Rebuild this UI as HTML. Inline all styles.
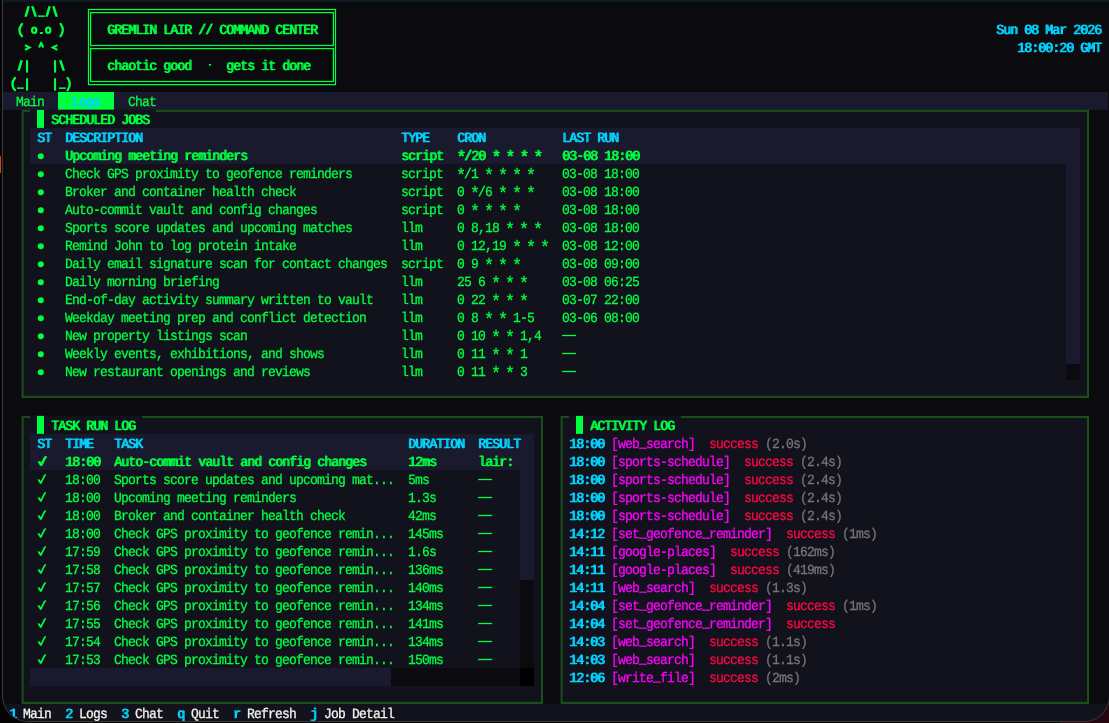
<!DOCTYPE html>
<html><head><meta charset="utf-8"><title>Gremlin Lair</title>
<style>
html,body{margin:0;padding:0;width:1109px;height:723px;overflow:hidden;background:#050505}
#br{position:absolute;left:1060px;top:690px;width:49px;height:33px;background:#26070f}
#win{position:absolute;left:2px;top:-40px;width:1108px;height:762px;box-sizing:border-box;border:1px solid #3a3a3e;border-top:none;border-radius:0 0 26px 26px;overflow:hidden;background:#0a0a0f}
#scr{position:absolute;left:-3px;top:40px;width:1109px;height:723px}
#txt{position:absolute;left:0;top:0;width:1109px;height:723px;will-change:transform}
#txo{position:absolute;left:0;top:0;width:1109px;height:723px;will-change:transform}
.r{position:absolute}
.t{position:absolute;font:14px/18px "Liberation Mono",monospace;white-space:pre;letter-spacing:-0.8745px;transform:scaleX(0.93);transform-origin:0 0;margin-top:2px;-webkit-text-stroke:0.3px currentColor;text-rendering:geometricPrecision}
.ast{font-size:18px;margin-top:3.7px;margin-left:-1.35px;-webkit-text-stroke:0.3px currentColor}
.us{margin-top:1px}
.b{text-shadow:1px 0 0 currentColor}
.g{color:#00ff41}.c{color:#00d4ff}.m{color:#ff00ff}.rd{color:#ff0844}.gy{color:#767678}.w{color:#f2f2ec}
</style></head><body>
<div id="br"></div><div style="position:absolute;left:0;top:156px;width:1px;height:17px;background:#cc4a0a"></div>
<div id="win"><div id="scr">
<svg class="r" style="left:0;top:0" width="1109" height="723" viewBox="0 0 1109 723">
<rect x="0" y="0" width="1109" height="2.2" fill="#0d1a24"/>
<rect x="3" y="92" width="1105" height="18" fill="#1a1a2e"/>
<rect x="58" y="92" width="56" height="18" fill="#00ff41"/>
<rect x="3" y="704" width="1105" height="20" fill="#12121c"/>
<polygon transform="translate(23 2)" points="1.3,14.8 3.9,14.8 6.9,4.2 4.3,4.2" fill="#00ff41"/>
<polygon transform="translate(30 2)" points="4.4,14.8 7.0,14.8 3.7,4.2 1.1,4.2" fill="#00ff41"/>
<rect transform="translate(37 2)" x="1.0" y="13.4" width="6.8" height="1.5" fill="#00ff41"/>
<polygon transform="translate(44 2)" points="1.3,14.8 3.9,14.8 6.9,4.2 4.3,4.2" fill="#00ff41"/>
<polygon transform="translate(51 2)" points="4.4,14.8 7.0,14.8 3.7,4.2 1.1,4.2" fill="#00ff41"/>
<path transform="translate(16 20)" d="M6.0 3.9 Q0.8 10 6.0 16.2" fill="none" stroke="#00ff41" stroke-width="2.3" stroke-linecap="round"/>
<path transform="translate(30 20)" fill-rule="evenodd" fill="#00ff41" d="M0.95 10.2 a3.25 3.75 0 1 0 6.5 0 a3.25 3.75 0 1 0 -6.5 0 Z M3.2 10.2 a1.0 1.75 0 1 0 2.0 0 a1.0 1.75 0 1 0 -2.0 0 Z"/>
<rect transform="translate(37 20)" x="2.9" y="12.0" width="3.0" height="2.0" rx="0.5" fill="#00ff41"/>
<path transform="translate(44 20)" fill-rule="evenodd" fill="#00ff41" d="M0.95 10.2 a3.25 3.75 0 1 0 6.5 0 a3.25 3.75 0 1 0 -6.5 0 Z M3.2 10.2 a1.0 1.75 0 1 0 2.0 0 a1.0 1.75 0 1 0 -2.0 0 Z"/>
<path transform="translate(58 20)" d="M2.6 3.9 Q7.0 10 2.6 16.2" fill="none" stroke="#00ff41" stroke-width="2.3" stroke-linecap="round"/>
<path transform="translate(23 38)" d="M1.9 7.1 L6.6 9.5 L1.9 11.9" fill="none" stroke="#00ff41" stroke-width="2.1" stroke-linejoin="miter"/>
<path transform="translate(37 38)" d="M2.1 9.5 L4.15 4.7 L6.2 9.5" fill="none" stroke="#00ff41" stroke-width="2.1" stroke-linejoin="round"/>
<path transform="translate(51 38)" d="M6.4 7.1 L1.7 9.5 L6.4 11.9" fill="none" stroke="#00ff41" stroke-width="2.1" stroke-linejoin="miter"/>
<polygon transform="translate(16 56)" points="1.3,14.8 3.9,14.8 6.9,4.2 4.3,4.2" fill="#00ff41"/>
<rect transform="translate(23 56)" x="3.0" y="4.2" width="2.1" height="12.4" fill="#00ff41"/>
<rect transform="translate(51 56)" x="3.0" y="4.2" width="2.1" height="12.4" fill="#00ff41"/>
<polygon transform="translate(58 56)" points="4.4,14.8 7.0,14.8 3.7,4.2 1.1,4.2" fill="#00ff41"/>
<path transform="translate(9 74)" d="M6.0 3.9 Q0.8 10 6.0 16.2" fill="none" stroke="#00ff41" stroke-width="2.3" stroke-linecap="round"/>
<rect transform="translate(16 74)" x="1.0" y="13.4" width="6.8" height="1.5" fill="#00ff41"/>
<rect transform="translate(23 74)" x="3.0" y="4.2" width="2.1" height="12.4" fill="#00ff41"/>
<rect transform="translate(51 74)" x="3.0" y="4.2" width="2.1" height="12.4" fill="#00ff41"/>
<rect transform="translate(58 74)" x="1.0" y="13.4" width="6.8" height="1.5" fill="#00ff41"/>
<path transform="translate(65 74)" d="M2.6 3.9 Q7.0 10 2.6 16.2" fill="none" stroke="#00ff41" stroke-width="2.3" stroke-linecap="round"/>
<rect x="88.5" y="9.5" width="247" height="75.1" fill="none" stroke="#00ff41" stroke-width="1.25"/>
<rect x="90.6" y="12.6" width="242.8" height="32.9" fill="none" stroke="#00ff41" stroke-width="1.25"/>
<rect x="90.6" y="48.6" width="242.8" height="32.9" fill="none" stroke="#00ff41" stroke-width="1.25"/>
<rect x="208.75" y="63.95" width="2.5" height="1.9" rx="0.8" fill="#00ff41"/>
<rect x="21.6" y="109.9" width="1067.4" height="288.1" fill="#1a4e1a"/>
<rect x="23.6" y="111.9" width="1063.4" height="283.9" fill="#12121c"/>
<rect x="30" y="109.7" width="126" height="2.6" fill="#12121c"/>
<rect x="37" y="109.9" width="7" height="18" fill="#00ff41"/>
<rect x="30" y="128" width="1050" height="36" fill="#1a1a2e"/>
<rect x="1066" y="128" width="14" height="236" fill="#1a1a2e"/>
<rect x="1066" y="364" width="14" height="16" fill="#0a0a0f"/>
<circle cx="40.8" cy="156.3" r="3" fill="#00ff41"/>
<circle cx="40.8" cy="174.3" r="3" fill="#00ff41"/>
<circle cx="40.8" cy="192.3" r="3" fill="#00ff41"/>
<circle cx="40.8" cy="210.3" r="3" fill="#00ff41"/>
<circle cx="40.8" cy="228.3" r="3" fill="#00ff41"/>
<circle cx="40.8" cy="246.3" r="3" fill="#00ff41"/>
<circle cx="40.8" cy="264.3" r="3" fill="#00ff41"/>
<circle cx="40.8" cy="282.3" r="3" fill="#00ff41"/>
<circle cx="40.8" cy="300.3" r="3" fill="#00ff41"/>
<circle cx="40.8" cy="318.3" r="3" fill="#00ff41"/>
<circle cx="40.8" cy="336.3" r="3" fill="#00ff41"/>
<rect x="562.1" y="334.85" width="14" height="1.3" fill="#00ff41"/>
<circle cx="40.8" cy="354.3" r="3" fill="#00ff41"/>
<rect x="562.1" y="352.85" width="14" height="1.3" fill="#00ff41"/>
<circle cx="40.8" cy="372.3" r="3" fill="#00ff41"/>
<rect x="562.1" y="370.85" width="14" height="1.3" fill="#00ff41"/>
<rect x="21.6" y="415.9" width="521.4" height="288.1" fill="#1a4e1a"/>
<rect x="23.6" y="417.9" width="517.4" height="283.9" fill="#12121c"/>
<rect x="30" y="415.7" width="112" height="2.6" fill="#12121c"/>
<rect x="37" y="415.9" width="7" height="18" fill="#00ff41"/>
<rect x="30" y="434" width="504" height="36" fill="#1a1a2e"/>
<rect x="520" y="434" width="14" height="146" fill="#1a1a2e"/>
<rect x="520" y="580" width="14" height="88" fill="#0a0a0f"/>
<rect x="30" y="668" width="361" height="18" fill="#1a1a2e"/>
<rect x="391" y="668" width="129" height="18" fill="#0a0a0f"/>
<rect x="520" y="668" width="14" height="18" fill="#000"/>
<polygon transform="translate(37 452)" points="0.5,9.5 2.3,9.2 3.8,11.2 6.9,5.1 8.9,3.9 9.3,4.4 7.1,8.3 5.0,12.8 4.2,14.0 3.1,13.8 1.6,11.4" fill="#00ff41"/>
<polygon transform="translate(37.9 452)" points="0.5,9.5 2.3,9.2 3.8,11.2 6.9,5.1 8.9,3.9 9.3,4.4 7.1,8.3 5.0,12.8 4.2,14.0 3.1,13.8 1.6,11.4" fill="#00ff41"/>
<polygon transform="translate(37 470)" points="0.5,9.5 2.3,9.2 3.8,11.2 6.9,5.1 8.9,3.9 9.3,4.4 7.1,8.3 5.0,12.8 4.2,14.0 3.1,13.8 1.6,11.4" fill="#00ff41"/>
<rect x="478.1" y="478.85" width="14" height="1.3" fill="#00ff41"/>
<polygon transform="translate(37 488)" points="0.5,9.5 2.3,9.2 3.8,11.2 6.9,5.1 8.9,3.9 9.3,4.4 7.1,8.3 5.0,12.8 4.2,14.0 3.1,13.8 1.6,11.4" fill="#00ff41"/>
<rect x="478.1" y="496.85" width="14" height="1.3" fill="#00ff41"/>
<polygon transform="translate(37 506)" points="0.5,9.5 2.3,9.2 3.8,11.2 6.9,5.1 8.9,3.9 9.3,4.4 7.1,8.3 5.0,12.8 4.2,14.0 3.1,13.8 1.6,11.4" fill="#00ff41"/>
<rect x="478.1" y="514.85" width="14" height="1.3" fill="#00ff41"/>
<polygon transform="translate(37 524)" points="0.5,9.5 2.3,9.2 3.8,11.2 6.9,5.1 8.9,3.9 9.3,4.4 7.1,8.3 5.0,12.8 4.2,14.0 3.1,13.8 1.6,11.4" fill="#00ff41"/>
<rect x="478.1" y="532.85" width="14" height="1.3" fill="#00ff41"/>
<polygon transform="translate(37 542)" points="0.5,9.5 2.3,9.2 3.8,11.2 6.9,5.1 8.9,3.9 9.3,4.4 7.1,8.3 5.0,12.8 4.2,14.0 3.1,13.8 1.6,11.4" fill="#00ff41"/>
<rect x="478.1" y="550.85" width="14" height="1.3" fill="#00ff41"/>
<polygon transform="translate(37 560)" points="0.5,9.5 2.3,9.2 3.8,11.2 6.9,5.1 8.9,3.9 9.3,4.4 7.1,8.3 5.0,12.8 4.2,14.0 3.1,13.8 1.6,11.4" fill="#00ff41"/>
<rect x="478.1" y="568.85" width="14" height="1.3" fill="#00ff41"/>
<polygon transform="translate(37 578)" points="0.5,9.5 2.3,9.2 3.8,11.2 6.9,5.1 8.9,3.9 9.3,4.4 7.1,8.3 5.0,12.8 4.2,14.0 3.1,13.8 1.6,11.4" fill="#00ff41"/>
<rect x="478.1" y="586.85" width="14" height="1.3" fill="#00ff41"/>
<polygon transform="translate(37 596)" points="0.5,9.5 2.3,9.2 3.8,11.2 6.9,5.1 8.9,3.9 9.3,4.4 7.1,8.3 5.0,12.8 4.2,14.0 3.1,13.8 1.6,11.4" fill="#00ff41"/>
<rect x="478.1" y="604.85" width="14" height="1.3" fill="#00ff41"/>
<polygon transform="translate(37 614)" points="0.5,9.5 2.3,9.2 3.8,11.2 6.9,5.1 8.9,3.9 9.3,4.4 7.1,8.3 5.0,12.8 4.2,14.0 3.1,13.8 1.6,11.4" fill="#00ff41"/>
<rect x="478.1" y="622.85" width="14" height="1.3" fill="#00ff41"/>
<polygon transform="translate(37 632)" points="0.5,9.5 2.3,9.2 3.8,11.2 6.9,5.1 8.9,3.9 9.3,4.4 7.1,8.3 5.0,12.8 4.2,14.0 3.1,13.8 1.6,11.4" fill="#00ff41"/>
<rect x="478.1" y="640.85" width="14" height="1.3" fill="#00ff41"/>
<polygon transform="translate(37 650)" points="0.5,9.5 2.3,9.2 3.8,11.2 6.9,5.1 8.9,3.9 9.3,4.4 7.1,8.3 5.0,12.8 4.2,14.0 3.1,13.8 1.6,11.4" fill="#00ff41"/>
<rect x="478.1" y="658.85" width="14" height="1.3" fill="#00ff41"/>
<rect x="560.6" y="415.9" width="528.4" height="288.1" fill="#1a4e1a"/>
<rect x="562.6" y="417.9" width="524.4" height="283.9" fill="#12121c"/>
<rect x="569" y="415.7" width="112" height="2.6" fill="#12121c"/>
<rect x="576" y="415.9" width="7" height="18" fill="#00ff41"/>
</svg>
<div id="txo"><div id="txt">
<span class="t g b" style="left:107px;top:20px">GREMLIN LAIR // COMMAND CENTER</span>
<span class="t g b" style="left:107px;top:56px">chaotic good</span>
<span class="t g b" style="left:226px;top:56px">gets it done</span>
<span class="t c b" style="left:996px;top:20px">Sun 08 Mar 2026</span>
<span class="t c b" style="left:1017px;top:38px">18:00:20 GMT</span>
<span class="t g" style="left:16px;top:92px">Main</span>
<span class="t c b" style="left:72px;top:92px">Logs</span>
<span class="t g" style="left:128px;top:92px">Chat</span>
<span class="t g b" style="left:51px;top:110px">SCHEDULED JOBS</span>
<span class="t c b" style="left:37px;top:128px">ST</span>
<span class="t c b" style="left:65px;top:128px">DESCRIPTION</span>
<span class="t c b" style="left:401px;top:128px">TYPE</span>
<span class="t c b" style="left:457px;top:128px">CRON</span>
<span class="t c b" style="left:562px;top:128px">LAST RUN</span>
<span class="t g b" style="left:65px;top:146px">Upcoming meeting reminders</span>
<span class="t g b" style="left:401px;top:146px">script</span>
<span class="t ast g b" style="left:457px;top:146px">*</span>
<span class="t ast g b" style="left:492px;top:146px">*</span>
<span class="t ast g b" style="left:506px;top:146px">*</span>
<span class="t ast g b" style="left:520px;top:146px">*</span>
<span class="t ast g b" style="left:534px;top:146px">*</span>
<span class="t g b" style="left:457px;top:146px"> /20        </span>
<span class="t g b" style="left:562px;top:146px">03-08 18:00</span>
<span class="t g" style="left:65px;top:164px">Check GPS proximity to geofence reminders</span>
<span class="t g" style="left:401px;top:164px">script</span>
<span class="t ast g" style="left:457px;top:164px">*</span>
<span class="t ast g" style="left:485px;top:164px">*</span>
<span class="t ast g" style="left:499px;top:164px">*</span>
<span class="t ast g" style="left:513px;top:164px">*</span>
<span class="t ast g" style="left:527px;top:164px">*</span>
<span class="t g" style="left:457px;top:164px"> /1        </span>
<span class="t g" style="left:562px;top:164px">03-08 18:00</span>
<span class="t g" style="left:65px;top:182px">Broker and container health check</span>
<span class="t g" style="left:401px;top:182px">script</span>
<span class="t ast g" style="left:471px;top:182px">*</span>
<span class="t ast g" style="left:499px;top:182px">*</span>
<span class="t ast g" style="left:513px;top:182px">*</span>
<span class="t ast g" style="left:527px;top:182px">*</span>
<span class="t g" style="left:457px;top:182px">0  /6      </span>
<span class="t g" style="left:562px;top:182px">03-08 18:00</span>
<span class="t g" style="left:65px;top:200px">Auto-commit vault and config changes</span>
<span class="t g" style="left:401px;top:200px">script</span>
<span class="t ast g" style="left:471px;top:200px">*</span>
<span class="t ast g" style="left:485px;top:200px">*</span>
<span class="t ast g" style="left:499px;top:200px">*</span>
<span class="t ast g" style="left:513px;top:200px">*</span>
<span class="t g" style="left:457px;top:200px">0        </span>
<span class="t g" style="left:562px;top:200px">03-08 18:00</span>
<span class="t g" style="left:65px;top:218px">Sports score updates and upcoming matches</span>
<span class="t g" style="left:401px;top:218px">llm</span>
<span class="t ast g" style="left:506px;top:218px">*</span>
<span class="t ast g" style="left:520px;top:218px">*</span>
<span class="t ast g" style="left:534px;top:218px">*</span>
<span class="t g" style="left:457px;top:218px">0 8,18      </span>
<span class="t g" style="left:562px;top:218px">03-08 18:00</span>
<span class="t g" style="left:65px;top:236px">Remind John to log protein intake</span>
<span class="t g" style="left:401px;top:236px">llm</span>
<span class="t ast g" style="left:513px;top:236px">*</span>
<span class="t ast g" style="left:527px;top:236px">*</span>
<span class="t ast g" style="left:541px;top:236px">*</span>
<span class="t g" style="left:457px;top:236px">0 12,19      </span>
<span class="t g" style="left:562px;top:236px">03-08 12:00</span>
<span class="t g" style="left:65px;top:254px">Daily email signature scan for contact changes</span>
<span class="t g" style="left:401px;top:254px">script</span>
<span class="t ast g" style="left:485px;top:254px">*</span>
<span class="t ast g" style="left:499px;top:254px">*</span>
<span class="t ast g" style="left:513px;top:254px">*</span>
<span class="t g" style="left:457px;top:254px">0 9      </span>
<span class="t g" style="left:562px;top:254px">03-08 09:00</span>
<span class="t g" style="left:65px;top:272px">Daily morning briefing</span>
<span class="t g" style="left:401px;top:272px">llm</span>
<span class="t ast g" style="left:492px;top:272px">*</span>
<span class="t ast g" style="left:506px;top:272px">*</span>
<span class="t ast g" style="left:520px;top:272px">*</span>
<span class="t g" style="left:457px;top:272px">25 6      </span>
<span class="t g" style="left:562px;top:272px">03-08 06:25</span>
<span class="t g" style="left:65px;top:290px">End-of-day activity summary written to vault</span>
<span class="t g" style="left:401px;top:290px">llm</span>
<span class="t ast g" style="left:492px;top:290px">*</span>
<span class="t ast g" style="left:506px;top:290px">*</span>
<span class="t ast g" style="left:520px;top:290px">*</span>
<span class="t g" style="left:457px;top:290px">0 22      </span>
<span class="t g" style="left:562px;top:290px">03-07 22:00</span>
<span class="t g" style="left:65px;top:308px">Weekday meeting prep and conflict detection</span>
<span class="t g" style="left:401px;top:308px">llm</span>
<span class="t ast g" style="left:485px;top:308px">*</span>
<span class="t ast g" style="left:499px;top:308px">*</span>
<span class="t g" style="left:457px;top:308px">0 8     1-5</span>
<span class="t g" style="left:562px;top:308px">03-06 08:00</span>
<span class="t g" style="left:65px;top:326px">New property listings scan</span>
<span class="t g" style="left:401px;top:326px">llm</span>
<span class="t ast g" style="left:492px;top:326px">*</span>
<span class="t ast g" style="left:506px;top:326px">*</span>
<span class="t g" style="left:457px;top:326px">0 10     1,4</span>
<span class="t g" style="left:65px;top:344px">Weekly events, exhibitions, and shows</span>
<span class="t g" style="left:401px;top:344px">llm</span>
<span class="t ast g" style="left:492px;top:344px">*</span>
<span class="t ast g" style="left:506px;top:344px">*</span>
<span class="t g" style="left:457px;top:344px">0 11     1</span>
<span class="t g" style="left:65px;top:362px">New restaurant openings and reviews</span>
<span class="t g" style="left:401px;top:362px">llm</span>
<span class="t ast g" style="left:492px;top:362px">*</span>
<span class="t ast g" style="left:506px;top:362px">*</span>
<span class="t g" style="left:457px;top:362px">0 11     3</span>
<span class="t g b" style="left:51px;top:416px">TASK RUN LOG</span>
<span class="t c b" style="left:37px;top:434px">ST</span>
<span class="t c b" style="left:65px;top:434px">TIME</span>
<span class="t c b" style="left:114px;top:434px">TASK</span>
<span class="t c b" style="left:408px;top:434px">DURATION</span>
<span class="t c b" style="left:478px;top:434px">RESULT</span>
<span class="t g b" style="left:65px;top:452px">18:00</span>
<span class="t g b" style="left:114px;top:452px">Auto-commit vault and config changes</span>
<span class="t g b" style="left:408px;top:452px">12ms</span>
<span class="t g b" style="left:478px;top:452px">lair:</span>
<span class="t g" style="left:65px;top:470px">18:00</span>
<span class="t g" style="left:114px;top:470px">Sports score updates and upcoming mat...</span>
<span class="t g" style="left:408px;top:470px">5ms</span>
<span class="t g" style="left:65px;top:488px">18:00</span>
<span class="t g" style="left:114px;top:488px">Upcoming meeting reminders</span>
<span class="t g" style="left:408px;top:488px">1.3s</span>
<span class="t g" style="left:65px;top:506px">18:00</span>
<span class="t g" style="left:114px;top:506px">Broker and container health check</span>
<span class="t g" style="left:408px;top:506px">42ms</span>
<span class="t g" style="left:65px;top:524px">18:00</span>
<span class="t g" style="left:114px;top:524px">Check GPS proximity to geofence remin...</span>
<span class="t g" style="left:408px;top:524px">145ms</span>
<span class="t g" style="left:65px;top:542px">17:59</span>
<span class="t g" style="left:114px;top:542px">Check GPS proximity to geofence remin...</span>
<span class="t g" style="left:408px;top:542px">1.6s</span>
<span class="t g" style="left:65px;top:560px">17:58</span>
<span class="t g" style="left:114px;top:560px">Check GPS proximity to geofence remin...</span>
<span class="t g" style="left:408px;top:560px">136ms</span>
<span class="t g" style="left:65px;top:578px">17:57</span>
<span class="t g" style="left:114px;top:578px">Check GPS proximity to geofence remin...</span>
<span class="t g" style="left:408px;top:578px">140ms</span>
<span class="t g" style="left:65px;top:596px">17:56</span>
<span class="t g" style="left:114px;top:596px">Check GPS proximity to geofence remin...</span>
<span class="t g" style="left:408px;top:596px">134ms</span>
<span class="t g" style="left:65px;top:614px">17:55</span>
<span class="t g" style="left:114px;top:614px">Check GPS proximity to geofence remin...</span>
<span class="t g" style="left:408px;top:614px">141ms</span>
<span class="t g" style="left:65px;top:632px">17:54</span>
<span class="t g" style="left:114px;top:632px">Check GPS proximity to geofence remin...</span>
<span class="t g" style="left:408px;top:632px">134ms</span>
<span class="t g" style="left:65px;top:650px">17:53</span>
<span class="t g" style="left:114px;top:650px">Check GPS proximity to geofence remin...</span>
<span class="t g" style="left:408px;top:650px">150ms</span>
<span class="t g b" style="left:590px;top:416px">ACTIVITY LOG</span>
<span class="t c b" style="left:569px;top:434px">18:00</span>
<span class="t us m" style="left:639px;top:434px">_</span>
<span class="t m" style="left:611px;top:434px">[web search]</span>
<span class="t rd" style="left:709px;top:434px">success</span>
<span class="t gy" style="left:765px;top:434px">(2.0s)</span>
<span class="t c b" style="left:569px;top:452px">18:00</span>
<span class="t m" style="left:611px;top:452px">[sports-schedule]</span>
<span class="t rd" style="left:744px;top:452px">success</span>
<span class="t gy" style="left:800px;top:452px">(2.4s)</span>
<span class="t c b" style="left:569px;top:470px">18:00</span>
<span class="t m" style="left:611px;top:470px">[sports-schedule]</span>
<span class="t rd" style="left:744px;top:470px">success</span>
<span class="t gy" style="left:800px;top:470px">(2.4s)</span>
<span class="t c b" style="left:569px;top:488px">18:00</span>
<span class="t m" style="left:611px;top:488px">[sports-schedule]</span>
<span class="t rd" style="left:744px;top:488px">success</span>
<span class="t gy" style="left:800px;top:488px">(2.4s)</span>
<span class="t c b" style="left:569px;top:506px">18:00</span>
<span class="t m" style="left:611px;top:506px">[sports-schedule]</span>
<span class="t rd" style="left:744px;top:506px">success</span>
<span class="t gy" style="left:800px;top:506px">(2.4s)</span>
<span class="t c b" style="left:569px;top:524px">14:12</span>
<span class="t us m" style="left:639px;top:524px">_</span>
<span class="t us m" style="left:702px;top:524px">_</span>
<span class="t m" style="left:611px;top:524px">[set geofence reminder]</span>
<span class="t rd" style="left:786px;top:524px">success</span>
<span class="t gy" style="left:842px;top:524px">(1ms)</span>
<span class="t c b" style="left:569px;top:542px">14:11</span>
<span class="t m" style="left:611px;top:542px">[google-places]</span>
<span class="t rd" style="left:730px;top:542px">success</span>
<span class="t gy" style="left:786px;top:542px">(162ms)</span>
<span class="t c b" style="left:569px;top:560px">14:11</span>
<span class="t m" style="left:611px;top:560px">[google-places]</span>
<span class="t rd" style="left:730px;top:560px">success</span>
<span class="t gy" style="left:786px;top:560px">(419ms)</span>
<span class="t c b" style="left:569px;top:578px">14:11</span>
<span class="t us m" style="left:639px;top:578px">_</span>
<span class="t m" style="left:611px;top:578px">[web search]</span>
<span class="t rd" style="left:709px;top:578px">success</span>
<span class="t gy" style="left:765px;top:578px">(1.3s)</span>
<span class="t c b" style="left:569px;top:596px">14:04</span>
<span class="t us m" style="left:639px;top:596px">_</span>
<span class="t us m" style="left:702px;top:596px">_</span>
<span class="t m" style="left:611px;top:596px">[set geofence reminder]</span>
<span class="t rd" style="left:786px;top:596px">success</span>
<span class="t gy" style="left:842px;top:596px">(1ms)</span>
<span class="t c b" style="left:569px;top:614px">14:04</span>
<span class="t us m" style="left:639px;top:614px">_</span>
<span class="t us m" style="left:702px;top:614px">_</span>
<span class="t m" style="left:611px;top:614px">[set geofence reminder]</span>
<span class="t rd" style="left:786px;top:614px">success</span>
<span class="t c b" style="left:569px;top:632px">14:03</span>
<span class="t us m" style="left:639px;top:632px">_</span>
<span class="t m" style="left:611px;top:632px">[web search]</span>
<span class="t rd" style="left:709px;top:632px">success</span>
<span class="t gy" style="left:765px;top:632px">(1.1s)</span>
<span class="t c b" style="left:569px;top:650px">14:03</span>
<span class="t us m" style="left:639px;top:650px">_</span>
<span class="t m" style="left:611px;top:650px">[web search]</span>
<span class="t rd" style="left:709px;top:650px">success</span>
<span class="t gy" style="left:765px;top:650px">(1.1s)</span>
<span class="t c b" style="left:569px;top:668px">12:06</span>
<span class="t us m" style="left:653px;top:668px">_</span>
<span class="t m" style="left:611px;top:668px">[write file]</span>
<span class="t rd" style="left:709px;top:668px">success</span>
<span class="t gy" style="left:765px;top:668px">(2ms)</span>
<span class="t c b" style="left:9px;top:704px">1</span>
<span class="t w" style="left:23px;top:704px">Main</span>
<span class="t c b" style="left:65px;top:704px">2</span>
<span class="t w" style="left:79px;top:704px">Logs</span>
<span class="t c b" style="left:121px;top:704px">3</span>
<span class="t w" style="left:135px;top:704px">Chat</span>
<span class="t c b" style="left:177px;top:704px">q</span>
<span class="t w" style="left:191px;top:704px">Quit</span>
<span class="t c b" style="left:233px;top:704px">r</span>
<span class="t w" style="left:247px;top:704px">Refresh</span>
<span class="t c b" style="left:310px;top:704px">j</span>
<span class="t w" style="left:324px;top:704px">Job Detail</span>
</div></div>
</div></div>
</body></html>
